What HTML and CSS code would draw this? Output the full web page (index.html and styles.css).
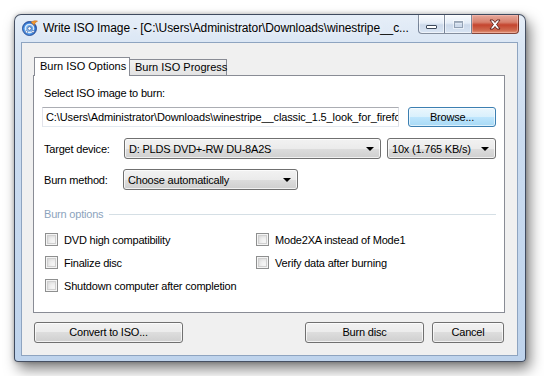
FILE: index.html
```html
<!DOCTYPE html>
<html>
<head>
<meta charset="utf-8">
<link rel="stylesheet" href="styles.css">
</head>
<body>
<div class="window">
  <div class="titlebar">
    <svg class="app-icon" width="16" height="16" viewBox="0 0 16 16">
      <defs>
        <radialGradient id="disc" cx="0.45" cy="0.55" r="0.6">
          <stop offset="0" stop-color="#bfe3ff"/>
          <stop offset="0.6" stop-color="#4c95e6"/>
          <stop offset="1" stop-color="#1b4fb0"/>
        </radialGradient>
      </defs>
      <circle cx="7.5" cy="8.5" r="7" fill="url(#disc)" stroke="#1a3f8a" stroke-width="0.8"/>
      <circle cx="7.5" cy="8.5" r="4.2" fill="none" stroke="#ffffff" stroke-width="1.2" stroke-opacity="0.8"/>
      <circle cx="7.5" cy="8.5" r="1.8" fill="#ffffff" stroke="#1a3f8a" stroke-width="0.7"/>
      <circle cx="4.5" cy="11.8" r="1.2" fill="#ffffff" stroke="#1a3f8a" stroke-width="0.5"/>
      <circle cx="11" cy="11.5" r="1.2" fill="#ffffff" stroke="#1a3f8a" stroke-width="0.5"/>
      <path d="M9 2.5 C11 0.5 14 0.5 15.5 1.2 C13.5 2 12.5 3.5 12.2 5.5 C11.5 4.2 10.2 3.2 9 2.5 Z" fill="#f29a2e" stroke="#c0601a" stroke-width="0.5"/>
    </svg>
    <span class="title">Write ISO Image - [C:\Users\Administrator\Downloads\winestripe__c...</span>
    <div class="caption">
      <div class="cap-btn cap-min"><span class="min-glyph"></span></div>
      <div class="cap-btn cap-max"><span class="max-glyph"></span></div>
      <div class="cap-btn cap-close">
        <svg width="14" height="11" viewBox="0 0 14 11">
          <path d="M2 1 L5 1 L7 3.5 L9 1 L12 1 L8.6 5.5 L12 10 L9 10 L7 7.5 L5 10 L2 10 L5.4 5.5 Z" fill="#ffffff" stroke="#5a1e16" stroke-width="0.9" stroke-linejoin="round"/>
        </svg>
      </div>
    </div>
  </div>
  <div class="client">
    <div class="tabs">
      <div class="tab active">Burn ISO Options</div>
      <div class="tab">Burn ISO Progress</div>
    </div>
    <div class="panel">
      <div class="label first">Select ISO image to burn:</div>
      <div class="row path-row">
        <div class="textbox"><span>C:\Users\Administrator\Downloads\winestripe__classic_1.5_look_for_firefox.iso</span></div>
        <div class="btn browse">Browse...</div>
      </div>
      <div class="row field-row device-row">
        <div class="field-label">Target device:</div>
        <div class="combo device"><span>D: PLDS DVD+-RW DU-8A2S</span><i class="arrow"></i></div>
        <div class="combo speed"><span>10x (1.765 KB/s)</span><i class="arrow"></i></div>
      </div>
      <div class="row field-row method-row">
        <div class="field-label">Burn method:</div>
        <div class="combo method"><span>Choose automatically</span><i class="arrow"></i></div>
      </div>
      <div class="group-head">
        <span>Burn options</span>
        <div class="group-line"></div>
      </div>
      <div class="checks">
        <label class="check"><i class="box"></i>DVD high compatibility</label>
        <label class="check"><i class="box"></i>Mode2XA instead of Mode1</label>
        <label class="check"><i class="box"></i>Finalize disc</label>
        <label class="check"><i class="box"></i>Verify data after burning</label>
        <label class="check wide"><i class="box"></i>Shutdown computer after completion</label>
      </div>
    </div>
    <div class="footer">
      <div class="btn convert">Convert to ISO...</div>
      <div class="spacer"></div>
      <div class="btn burn">Burn disc</div>
      <div class="btn cancel">Cancel</div>
    </div>
  </div>
</div>
</body>
</html>
```

FILE: styles.css
```css
html, body {
  margin: 0;
  padding: 0;
  background: #ffffff;
}

body {
  padding: 14px;
  font-family: "Liberation Sans", Arial, sans-serif;
  font-size: 11px;
  color: #000;
}

.window {
  box-sizing: border-box;
  width: 512px;
  height: 348px;
  border: 1px solid rgba(30, 40, 60, 0.8);
  border-radius: 7px 7px 4px 4px;
  background: linear-gradient(to bottom, #e6eef8 0px, #dae6f4 30px, #cbdcf0 120px, #bed3ec 348px);
  box-shadow: 4px 7px 14px rgba(0, 0, 0, 0.5), 0 0 4px rgba(0,0,0,0.25);
  display: flex;
  flex-direction: column;
}

.titlebar {
  height: 27px;
  display: flex;
  align-items: flex-start;
  position: relative;
  padding-left: 7px;
}

.app-icon {
  margin-top: 5px;
  flex: none;
}

.title {
  margin-left: 5px;
  margin-top: 6px;
  font-size: 12px;
  line-height: 14px;
  color: #000;
  white-space: nowrap;
  overflow: hidden;
  width: 372px;
  letter-spacing: -0.1px;
  text-shadow: 0 0 6px rgba(255,255,255,0.9);
}

.caption {
  margin-left: auto;
  margin-right: 6px;
  display: flex;
  height: 19px;
}

.cap-btn {
  box-sizing: border-box;
  height: 19px;
  border: 1px solid rgba(40, 55, 80, 0.55);
  border-top: none;
  display: flex;
  align-items: center;
  justify-content: center;
}

.cap-min {
  width: 27px;
  border-radius: 0 0 0 4px;
  background: linear-gradient(to bottom, rgba(255,255,255,0.75) 0%, rgba(230,238,248,0.6) 45%, rgba(190,205,225,0.6) 55%, rgba(215,228,244,0.7) 100%);
  box-shadow: inset 0 0 0 1px rgba(255,255,255,0.55);
}

.cap-max {
  width: 27px;
  border-left: none;
  background: linear-gradient(to bottom, rgba(255,255,255,0.75) 0%, rgba(230,238,248,0.6) 45%, rgba(190,205,225,0.6) 55%, rgba(215,228,244,0.7) 100%);
  box-shadow: inset 0 0 0 1px rgba(255,255,255,0.55);
}

.cap-close {
  width: 47px;
  border-left: none;
  border-radius: 0 0 4px 0;
  border-color: rgba(90, 30, 20, 0.7);
  background: linear-gradient(to bottom, #e6a99c 0%, #d7806d 40%, #c4452f 55%, #cf6a4f 85%, #e29a7e 100%);
  box-shadow: inset 0 0 0 1px rgba(255,200,190,0.45);
}

.min-glyph {
  display: block;
  width: 9px;
  height: 2px;
  margin-top: 5px;
  background: #fff;
  border: 1px solid #3d4a5c;
  border-radius: 1px;
}

.max-glyph {
  display: block;
  width: 7px;
  height: 5px;
  border: 1px solid rgba(120, 135, 155, 0.7);
  box-shadow: inset 0 1px 0 rgba(120,135,155,0.6), 0 0 0 1px rgba(255,255,255,0.5);
}

.client {
  box-sizing: border-box;
  margin: 0 7px 5px 6px;
  flex: 1;
  background: #f0f0f0;
  border: 1px solid #8ea4c0;
  padding: 14px 11px 0 11px;
  display: flex;
  flex-direction: column;
}

.tabs {
  display: flex;
  align-items: flex-end;
  height: 18px;
  padding-left: 1px;
  position: relative;
  z-index: 1;
}

.tab {
  box-sizing: border-box;
  height: 16px;
  border: 1px solid #898c95;
  border-bottom: none;
  background: linear-gradient(to bottom, #f2f2f2, #e3e3e3);
  padding: 0 4px;
  line-height: 15px;
  white-space: nowrap;
}

.tab.active {
  height: 19px;
  margin-bottom: -1px;
  background: #ffffff;
  width: 96px;
  padding-left: 5px;
  line-height: 16px;
  margin-right: -1px;
  position: relative;
  z-index: 2;
}

.tab:not(.active) {
  width: 98px;
  padding-left: 5px;
}

.panel {
  box-sizing: border-box;
  width: 472px;
  height: 238px;
  border: 1px solid #898c95;
  background: #ffffff;
  padding: 10px 8px 0 10px;
}

.label {
  line-height: 14px;
  letter-spacing: -0.2px;
}

.row {
  display: flex;
  align-items: center;
}

.path-row {
  margin-top: 7px;
  margin-left: -2px;
  height: 20px;
}

.textbox {
  box-sizing: border-box;
  width: 357px;
  height: 20px;
  border: 1px solid #abadb3;
  border-left-color: #e2e3ea;
  border-right-color: #dbdfe6;
  border-bottom-color: #e3e9ef;
  overflow: hidden;
  white-space: nowrap;
  padding-left: 3px;
  line-height: 18px;
  letter-spacing: -0.12px;
}

.btn {
  box-sizing: border-box;
  height: 21px;
  border: 1px solid #707070;
  border-radius: 3px;
  background: linear-gradient(to bottom, #f2f2f2 0%, #ebebeb 50%, #dddddd 50%, #cfcfcf 100%);
  box-shadow: inset 0 0 0 1px rgba(255,255,255,0.7);
  text-align: center;
  line-height: 19px;
  letter-spacing: -0.2px;
}

.browse {
  margin-left: 9px;
  width: 88px;
  height: 20px;
  line-height: 18px;
  border-color: #3c7fb1;
  background: linear-gradient(to bottom, #eaf6fd 0%, #d9f0fc 50%, #bee6fd 50%, #a7d9f5 100%);
  box-shadow: inset 0 0 0 1px rgba(255,255,255,0.6);
}

.field-row {
  height: 21px;
}

.device-row {
  margin-top: 11px;
}

.method-row {
  margin-top: 10px;
}

.field-label {
  width: 80px;
  letter-spacing: -0.2px;
}

.combo {
  box-sizing: border-box;
  height: 21px;
  border: 1px solid #707070;
  border-radius: 3px;
  background: linear-gradient(to bottom, #f2f2f2 0%, #ebebeb 50%, #dddddd 50%, #cfcfcf 100%);
  box-shadow: inset 0 0 0 1px rgba(255,255,255,0.7);
  display: flex;
  align-items: center;
  padding-left: 4px;
  padding-right: 6px;
  letter-spacing: -0.2px;
  white-space: nowrap;
}

.combo span {
  flex: 1;
}

.arrow {
  display: block;
  width: 0;
  height: 0;
  border-left: 4px solid transparent;
  border-right: 4px solid transparent;
  border-top: 4px solid #000;
}

.device {
  width: 257px;
}

.speed {
  width: 109px;
  margin-left: 6px;
}

.method {
  width: 175px;
  margin-left: -1px;
}

.group-head {
  margin-top: 17px;
  display: flex;
  align-items: center;
  height: 14px;
  color: #8ca3bd;
  letter-spacing: -0.2px;
}

.group-line {
  flex: 1;
  height: 1px;
  background: #d5dfe5;
  margin-left: 6px;
}

.checks {
  margin-top: 12px;
  margin-left: 1px;
  display: grid;
  grid-template-columns: 211px 200px;
  row-gap: 10px;
}

.check {
  display: flex;
  align-items: center;
  height: 13px;
  letter-spacing: -0.2px;
  white-space: nowrap;
}

.check.wide {
  grid-column: 1 / span 2;
}

.box {
  box-sizing: border-box;
  width: 13px;
  height: 13px;
  border: 1px solid #8e8f8f;
  background: #f4f4f4;
  box-shadow: inset 0 0 0 1px #f4f4f4, inset 0 0 0 2px #d0d0d0, inset 2px 2px 4px #cdcdcd;
  margin-right: 6px;
  flex: none;
}

.footer {
  margin-top: 9px;
  display: flex;
  padding-left: 1px;
  padding-right: 2px;
}

.spacer {
  flex: 1;
}

.convert {
  width: 149px;
}

.burn {
  width: 119px;
}

.cancel {
  width: 72px;
  margin-left: 8px;
}
```
